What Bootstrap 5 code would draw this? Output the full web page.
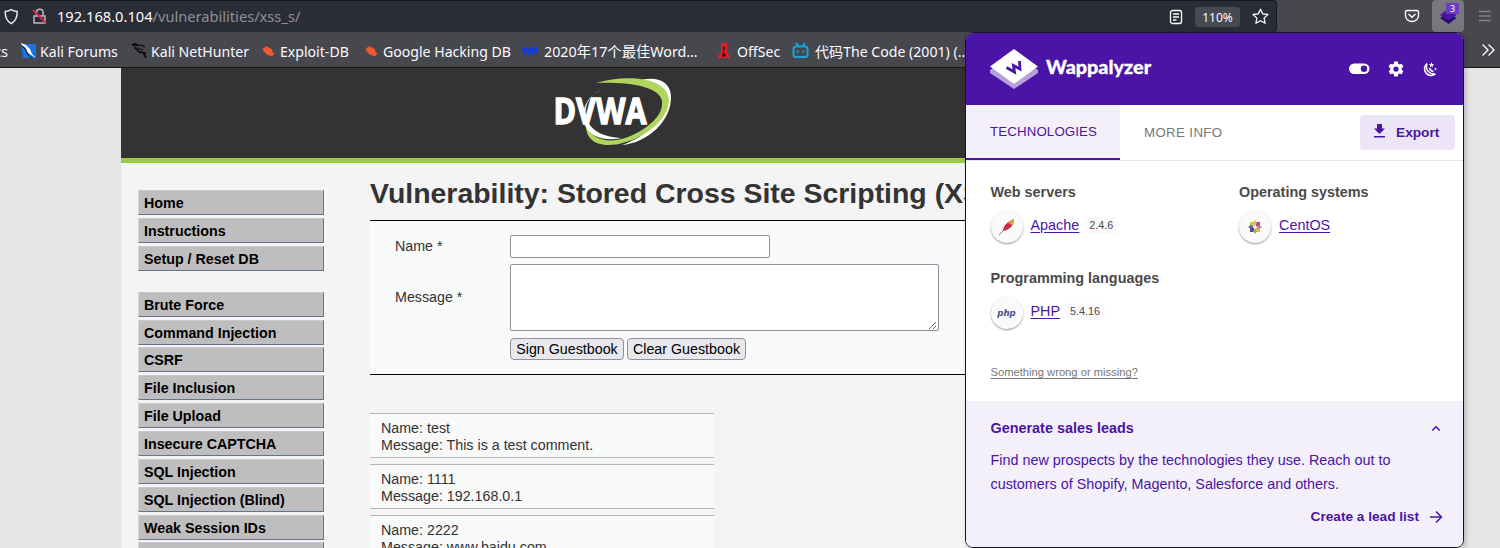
<!DOCTYPE html>
<html lang="en">
<head>
<meta charset="utf-8">
<title>Vulnerability: Stored Cross Site Scripting (XSS)</title>
<link href="https://cdn.jsdelivr.net/npm/bootstrap@5.3.0/dist/css/bootstrap.min.css" rel="stylesheet">
<style>
body{height:548px;overflow:hidden;background:#e6e6e6;font-family:"Liberation Sans",Arial,sans-serif;font-size:14.27px;line-height:17px;color:#333;white-space:nowrap}
svg{display:block;flex:none}
.urlbar{height:32px;background:#47474e;font-family:"Noto Sans",sans-serif}
.urlfield{width:1277px;height:32px;background:#2b2d36;border:1px solid #17181c;border-left:0;border-bottom:0;border-radius:0 4px 4px 0;padding:0 7px 0 4px;color:#fbfbfe}
.lockicon{margin-left:13px}
.urltext{font-size:14.65px;margin-left:9px;line-height:30px;margin-top:-1px}
.urltext span{color:#8f9097}
.zoomlvl{width:45px;height:20px;line-height:21px;background:#474a53;border-radius:3px;font-size:12px;text-align:center;margin:0 12px}
.pocket{margin-left:127px}
.extbtn{width:32px;height:32px;background:#77777c;border-radius:4px;margin-left:12px}
.extcount{left:14px;top:3px;width:13px;height:11px;background:#6d3bbd;color:#fff;font-size:9px;line-height:11px;text-align:center}
.burger{margin-left:14px}
.bookmarks{height:36px;background:#47474e;border-bottom:1px solid #17171a;color:#fbfbfe;font-family:"Noto Sans","Noto Sans CJK SC",sans-serif;font-size:14.1px;line-height:40px;overflow:hidden}
.bm{height:40px;flex:none;padding-top:4px}
.bm svg{margin-right:4px;margin-top:-2px}
.bm.wide svg{margin-right:6px}
.site{margin-left:121px;width:1246px;height:480px;background:#f4f4f4;overflow:hidden}
.sitehead{height:95px;background:#333;border-bottom:5px solid #9dca41}
.dvwa{margin-left:429px}
.sidenav{padding:27px 0 0 17px;width:203px;flex:none}
.navitem{height:25px;margin-bottom:2.86px;background:#bebebe;border:1px solid #c9c9c9;border-left-color:#d8d8d8;border-right-color:#64748a;border-bottom-color:#64748a;padding-left:5px;font-weight:bold;font-size:14.27px;line-height:24px;color:#000}
.navgap{margin-bottom:21px}
.maincol{margin-left:46px;width:950px;flex:none}
.maincol h1{font-size:28.45px;font-weight:bold;line-height:34px;margin:13px 0 10px;color:#333}
.formbox{height:155px;background:#f8faf9;border-top:1px solid #000;border-bottom:1px solid #000;padding:14px 0 0 25px}
.lbl{width:115px}
.field{background:#fff;border:1px solid #8f8f9d;border-radius:2px}
.inp{width:260px;height:23px}
.area{width:429px;height:67px}
.gbtn{height:22px;border:1px solid #8f8f9d;border-radius:4px;background:#e9e9ed;color:#000;line-height:20px;text-align:center}
.comments{padding-top:38px}
.comment{width:344px;height:45px;margin-bottom:6px;background:#f8faf9;border-top:1px solid #b5b5b5;border-bottom:1px solid #b5b5b5;padding:6px 11px;line-height:16.5px;overflow:hidden}
.popup{left:965px;top:32px;width:499px;height:516px;border:1px solid #16131c;border-radius:8px;background:#fff;overflow:hidden;box-shadow:2px 2px 5px #0003;color:#4a4a4a;font-size:14px}
.pophead{height:72px;background:#4a14a6;padding:0 25px 0 24px}
.brand{font-family:Lato,sans-serif;font-weight:900;font-size:19.8px;margin:-5px 0 0 8px;color:#fff;-webkit-text-stroke:.3px #fff}
.tabs{height:56px;border-bottom:1px solid #e6e4e8}
.tab{line-height:54px;padding-left:24px;font-size:13.3px;letter-spacing:.12px;color:#777}
.tabon{width:154px;height:55px;background:#f4f0f9;border-bottom:2px solid #4a14a6;color:#4a14a6}
.tab.more{letter-spacing:.35px}
.export{width:95px;height:35px;border-radius:4px;background:#ece5f5;color:#4a14a6;font-weight:bold;margin-left:auto;margin-right:8px;margin-top:-1px;padding-left:13px;font-size:13.7px}
.cats{padding:22px 0 0 24.500px}
.cat{font-weight:bold;font-size:14.4px;line-height:18px}
.tech{margin-top:9px;height:33px}
.tech a{color:#4a14a6;font-size:14.4px;margin-left:8px;margin-top:-3px;text-underline-offset:2px}
.ver{font-size:10.8px;background:#fafafa;border-radius:4px;padding:0 5px;margin-left:5px;margin-top:-3px}
.disc{width:32px;height:32px;border-radius:50%;background:#fafafa;box-shadow:0 1px 2px #0006}
.phpmark{font:italic bold 8.600px/32px "DejaVu Sans",sans-serif;color:#445087}
.wrong{font-size:11.2px;color:#777;line-height:14px;text-decoration:underline;text-underline-offset:2px;margin-top:36px}
.leads{height:148px;margin-top:22px;background:#f4f0f9;color:#4a14a6;padding:18px 20px 0 24.500px}
.leadtext{margin-top:11px;line-height:24px;font-size:14.37px}
.leadlink{margin-top:12px;font-size:13.65px}
</style>
</head>
<body>
<div class="urlbar d-flex align-items-center">
  <div class="urlfield d-flex align-items-center">
    <svg width="15" height="18" viewBox="0 0 15 18" fill="none" stroke="#f0f0f4" stroke-width="1.4"><path d="M7.200 1.700c2 1.300 4 1.700 6 1.800.1 5.500-1.200 9.500-6 12.200-4.800-2.700-6.100-6.700-6-12.200 2-.1 4-.5 6-1.800z"/></svg>
    <svg class="lockicon" width="16" height="18" viewBox="0 0 16 18" fill="none" stroke="#b9b9c0" stroke-width="1.500"><path d="M2 8h11v7H2zM4.500 8V4.500a3.300 3.300 0 0 1 6.600 0V8"/><path d="M1 2l13 13" stroke="#e22850" stroke-width="1.800"/></svg>
    <div class="urltext">192.168.0.104<span>/vulnerabilities/xss_s/</span></div>
    <svg class="ms-auto" width="14" height="16" viewBox="0 0 14 16" fill="none" stroke="#fbfbfe" stroke-width="1.300"><rect x="1.500" y="1.500" width="11" height="13" rx="2"/><path d="M4 5h6M4 8h6M4 11h3.500"/></svg>
    <div class="zoomlvl">110%</div>
    <svg width="17" height="17" viewBox="0 0 17 17" fill="none" stroke="#fbfbfe" stroke-width="1.300" stroke-linejoin="round"><path d="M8.500 1.200l2.200 4.700 5.200.6-3.800 3.600 1 5.200-4.600-2.600-4.600 2.600 1-5.200L1.100 6.500l5.200-.6z"/></svg>
  </div>
  <svg class="pocket" width="16" height="16" viewBox="0 0 16 16" fill="none" stroke="#fbfbfe" stroke-width="1.400"><path d="M3 2.500h10c1 0 1.500.5 1.500 1.500v3.500a6.500 6 0 0 1-13 0V4c0-1 .5-1.500 1.500-1.500zM4.500 6l3.500 3.300L11.500 6"/></svg>
  <div class="extbtn position-relative">
    <svg width="32" height="32" viewBox="0 0 32 32"><path d="M8 18l8.500-5 8 5-8 6z" fill="#23106b"/><path d="M8 15l8.500-6.500 8 6.500-8 5.500z" fill="#4a14a6"/></svg>
    <div class="extcount position-absolute">3</div>
  </div>
  <svg class="burger" width="14" height="14" viewBox="0 0 14 14" stroke="#828287" stroke-width="1.500"><path d="M1 2.500h11.500M1 7h11.500M1 11.500h11.500"/></svg>
</div>
<div class="bookmarks d-flex align-items-center">
  <div class="bm d-flex align-items-center justify-content-end" style="width:8px;margin-right:13px">cs</div>
  <div class="bm d-flex align-items-center" style="width:111px"><svg width="15" height="16" viewBox="0 0 15 16"><path d="M0 1h15v14H2z" fill="#1675e0"/><path d="M0 0l5 2 4 4 2 5 4 4-5-3-4-3-1-4-4-3z" fill="#fff"/><path d="M1 3l4 4 2 5 4 3" stroke="#111" fill="none"/></svg>Kali Forums</div>
  <div class="bm d-flex align-items-center" style="width:129px"><svg width="15" height="16" viewBox="0 0 15 16" fill="none" stroke="#101014"><path d="M0 2c3-2 5-1 6 1M2 5c4-1 3 4 6 4s5 2 6 6" stroke-width="2"/><path d="M0 2c4 2 9-2 13 2M6 5l5 2M8 9l6 1" stroke-width="1.300"/></svg>Kali NetHunter</div>
  <div class="bm d-flex align-items-center" style="width:103px"><svg width="15" height="16" viewBox="0 0 15 16"><path d="M1 5l3-.5 1-1.500 3 1.500 3 2 .5 2.500 2.500 2-2 .5-.5 2-2-.7-4-1.300-2-2.500-2-1 1.500-1z" fill="#f1582f"/></svg>Exploit-DB</div>
  <div class="bm d-flex align-items-center" style="width:158px"><svg width="15" height="16" viewBox="0 0 15 16"><path d="M1 5l3-.5 1-1.500 3 1.500 3 2 .5 2.500 2.500 2-2 .5-.5 2-2-.7-4-1.300-2-2.500-2-1 1.500-1z" fill="#f1582f"/></svg>Google Hacking DB</div>
  <div class="bm wide d-flex align-items-center" style="width:195px;font-size:14.3px"><svg width="16" height="16" viewBox="0 0 16 16" fill="none" stroke="#0b3de0" stroke-width="2.300"><path d="M1 4.500l1.500 6 2.500-5 1.500 5 2.500-6M9.500 12l1-6.500h3c2 0 1.500 3.500-.5 3.500h-3"/></svg>2020年17个最佳Word…</div>
  <div class="bm wide d-flex align-items-center" style="width:75px"><svg width="14" height="17" viewBox="0 0 14 17"><path d="M4 1h6v9l3 4v2H1v-2l3-4z" fill="#e11d28"/><path d="M6.500 3l1.500 3-1 4 2 4-4 1 1-5z" fill="#2b1013"/></svg>OffSec</div>
  <div class="bm wide d-flex align-items-center" style="width:190px"><svg width="17" height="17" viewBox="0 0 17 17" fill="none" stroke="#14a3dc" stroke-width="2"><rect x="1.500" y="4.500" width="14" height="10.500" rx="2.500"/><path d="M4 1l2.500 3M13 1l-2.500 3M5.800 8.500v2M11.200 8.500v2"/></svg>代码The Code (2001) (…</div>
  <svg class="ms-auto me-1" width="15" height="14" viewBox="0 0 15 14" fill="none" stroke="#fbfbfe" stroke-width="1.400"><path d="M1.500 1.500L7 7l-5.500 5.500M7.500 1.500L13 7l-5.500 5.500"/></svg>
</div>

<div class="site">
  <div class="sitehead">
    <svg class="dvwa" width="130" height="90" viewBox="0 0 130 90">
      <path d="M88 13C103 8 120 11 121 28c1 25-24 47-49 49C96 69 113 52 113 32c0-13-12-18-25-19z" fill="#fff"/>
      <path d="M46 15C76 6 118 9 119 32c-1 26-38 46-63 45-13-1-20-8-20-19 8 16 25 17 42 11 20-8 36-22 34-36-3-16-38-19-66-18z" fill="#afd55c"/>
      <path d="M49 20C34 26 29 39 33 51c5 12 18 17 34 18C52 73 34 68 30 54c-3-16 4-27 19-34z" fill="#fff" transform="translate(4 1)"/>
      <text x="3.500" y="56" font-family="Open Sans,sans-serif" font-weight="700" font-size="35" textLength="93" lengthAdjust="spacingAndGlyphs" fill="#fff" stroke="#fff" stroke-width="1.300">DVWA</text>
    </svg>
  </div>
  <div class="d-flex">
    <nav class="sidenav">
      <div class="navitem">Home</div>
      <div class="navitem">Instructions</div>
      <div class="navitem navgap">Setup / Reset DB</div>
      <div class="navitem">Brute Force</div>
      <div class="navitem">Command Injection</div>
      <div class="navitem">CSRF</div>
      <div class="navitem">File Inclusion</div>
      <div class="navitem">File Upload</div>
      <div class="navitem">Insecure CAPTCHA</div>
      <div class="navitem">SQL Injection</div>
      <div class="navitem">SQL Injection (Blind)</div>
      <div class="navitem">Weak Session IDs</div>
      <div class="navitem"></div>
    </nav>
    <main class="maincol">
      <h1>Vulnerability: Stored Cross Site Scripting (XSS)</h1>
      <div class="formbox">
        <div class="d-flex align-items-center"><div class="lbl">Name *</div><div class="field inp"></div></div>
        <div class="d-flex align-items-center" style="margin-top:6px"><div class="lbl">Message *</div>
          <div class="field area d-flex align-items-end justify-content-end"><svg width="9" height="9" viewBox="0 0 9 9" stroke="#777" stroke-width="1"><path d="M0 8l7-7M4 8l3-3"/></svg></div></div>
        <div class="d-flex" style="margin:7px 0 0 115px;gap:3px"><div class="gbtn" style="width:114px">Sign Guestbook</div><div class="gbtn" style="width:119px">Clear Guestbook</div></div>
      </div>
      <div class="comments">
        <div class="comment">Name: test<br>Message: This is a test comment.</div>
        <div class="comment">Name: 1111<br>Message: 192.168.0.1</div>
        <div class="comment">Name: 2222<br>Message: www.baidu.com</div>
      </div>
    </main>
  </div>
</div>

<div class="popup position-absolute">
  <div class="pophead d-flex align-items-center">
    <svg width="48" height="42" viewBox="0 0 48 42"><path d="M0 22L24 6l24 16v3L24 41 0 25z" fill="#b7a1db"/><path d="M0 18.500L24 1l24 17.500L24 36z" fill="#fff"/><path d="M16.500 19.500l8 4.500-1-6.500 6.500 3.500-.5-8" fill="none" stroke="#4a14a6" stroke-width="2.800"/></svg>
    <div class="brand">Wappalyzer</div>
    <svg class="ms-auto" width="21" height="12" viewBox="0 0 21 12"><rect y=".5" width="20.500" height="10.500" rx="5.200" fill="#fff"/><circle cx="15" cy="5.700" r="3.200" fill="#4a14a6"/></svg>
    <svg style="margin-left:17px" width="18" height="18" viewBox="0 0 24 24"><path fill="#fff" d="M12 15.500A3.500 3.500 0 1 1 12 8.500a3.500 3.500 0 0 1 0 7m7.430-2.530c.04-.32.07-.64.07-.97s-.03-.66-.07-1l2.110-1.630c.19-.15.24-.42.12-.64l-2-3.460c-.12-.22-.39-.31-.61-.22l-2.490 1c-.52-.39-1.060-.73-1.690-.98l-.37-2.650A.506.506 0 0 0 14 2h-4c-.25 0-.46.18-.5.420l-.37 2.650c-.63.25-1.170.59-1.690.98l-2.490-1c-.22-.09-.49 0-.61.22l-2 3.460c-.13.220-.07.490.12.640L4.570 11c-.04.340-.07.670-.07 1s.03.650.07.970l-2.110 1.660c-.19.150-.25.420-.12.640l2 3.460c.12.220.39.300.61.220l2.490-1.010c.52.400 1.060.740 1.690.990l.37 2.650c.04.240.25.420.5.420h4c.25 0 .46-.18.5-.42l.37-2.650c.63-.26 1.170-.59 1.690-.99l2.490 1.010c.22.080.49 0 .61-.22l2-3.460c.12-.22.07-.49-.12-.64z"/></svg>
    <svg style="margin-left:16px" width="17" height="17" viewBox="0 0 17 17" fill="none" stroke="#fff" stroke-width="1.500"><path d="M6 2.500a6.500 6.500 0 1 0 8.500 10.500M6 2.500c-2 6 2 11 8.500 10.500M8.500 7c.5 2 2 3.200 4 3.500"/><path d="M10.500 1l.7 2 2 .2-1.600 1.200.5 2-1.600-1.200-1.700 1.200.6-2-1.600-1.200 2-.2zM14.500 6.500l.5 1 1 .5-1 .5-.5 1-.5-1-1-.5 1-.5z" fill="#fff" stroke="none"/></svg>
  </div>
  <div class="tabs d-flex align-items-center">
    <div class="tab tabon">TECHNOLOGIES</div>
    <div class="tab more">MORE INFO</div>
    <div class="export d-flex align-items-center"><svg width="13" height="16" viewBox="0 0 13 16" fill="#4a14a6"><path d="M4 0h5v4.500h3L6.500 10 1 4.500h3zM1 12h11v1.500H1z"/></svg><span style="margin-left:10px">Export</span></div>
  </div>
  <div class="cats d-flex">
    <div style="width:248.500px">
      <div class="cat">Web servers</div>
      <div class="tech d-flex align-items-center"><div class="disc d-flex align-items-center justify-content-center"><svg width="18" height="18" viewBox="0 0 18 18"><path d="M5 13c0-5 4-9 11-12 0 6-4 11-11 12z" fill="#d2263e"/><path d="M10 5l6-4c0 3-1 5-2 6z" fill="#f39a38"/><path d="M1 17L12 6" stroke="#8b4a9c" stroke-width=".8"/></svg></div><a href="#">Apache</a><span class="ver">2.4.6</span></div>
    </div>
    <div>
      <div class="cat">Operating systems</div>
      <div class="tech d-flex align-items-center"><div class="disc d-flex align-items-center justify-content-center"><svg width="14" height="14" viewBox="0 0 14 14"><path d="M2 2h4v4H2z" fill="#a9d44c"/><path d="M8 2h4v4H8z" fill="#a54a92"/><path d="M2 8h4v4H2z" fill="#4b4a90"/><path d="M8 8h4v4H8z" fill="#f0b44c"/><path d="M7 0l2 3-2 3-2-3z" fill="#f0b050"/><path d="M0 7l3-2 3 2-3 2z" fill="#6a5aa0"/><path d="M14 7l-3-2-3 2 3 2z" fill="#b878b0"/><path d="M7 14l2-3-2-3-2 3z" fill="#8dbb3a"/><circle cx="7" cy="7" r="1.300" fill="#fafafa"/></svg></div><a href="#">CentOS</a></div>
    </div>
  </div>
  <div style="padding:26px 0 0 24.500px">
    <div class="cat">Programming languages</div>
    <div class="tech d-flex align-items-center"><div class="disc phpmark text-center">php</div><a href="#">PHP</a><span class="ver">5.4.16</span></div>
    <div class="wrong">Something wrong or missing?</div>
  </div>
  <div class="leads">
    <div class="d-flex align-items-center justify-content-between cat">Generate sales leads<svg style="margin-right:2px" width="10" height="7" viewBox="0 0 12 8" fill="none" stroke="#4a14a6" stroke-width="1.800"><path d="M1.500 6.500L6 2l4.500 4.500"/></svg></div>
    <div class="leadtext">Find new prospects by the technologies they use. Reach out to<br>customers of Shopify, Magento, Salesforce and others.</div>
    <div class="d-flex align-items-center justify-content-end cat leadlink">Create a lead list<svg style="margin-left:10px" width="14" height="14" viewBox="0 0 14 14" fill="none" stroke="#4a14a6" stroke-width="1.500"><path d="M1 7h11.500M7 1.500L12.500 7 7 12.500"/></svg></div>
  </div>
</div>
<script src="https://cdn.jsdelivr.net/npm/bootstrap@5.3.0/dist/js/bootstrap.bundle.min.js"></script>
</body>
</html>
